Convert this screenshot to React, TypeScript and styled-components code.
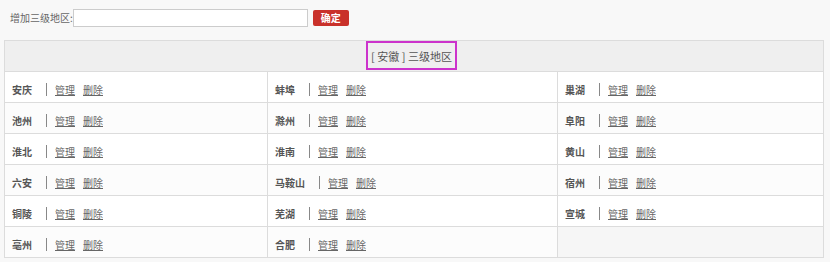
import React from "react";
import styled, { createGlobalStyle } from "styled-components";

const Global = createGlobalStyle`
  html, body { margin: 0; padding: 0; background: #ffffff; }
  body { font-family: "Noto Sans CJK SC", "Noto Sans", sans-serif; color: #555; }
`;

const Page = styled.div`
  width: 830px;
  height: 262px;
  background: #f8f8f8;
  box-sizing: border-box;
  padding: 9px 0 0 4px;
  overflow: hidden;
`;

const Toolbar = styled.div`
  display: flex;
  align-items: center;
  height: 18px;
  padding-left: 6px;
  margin-bottom: 13px;
`;

const Label = styled.span`
  font-size: 10px;
  color: #666;
  margin-right: 0;
  line-height: 18px;
  white-space: nowrap;
`;

const Input = styled.input`
  width: 235px;
  height: 18px;
  box-sizing: border-box;
  border: 1px solid #ccc;
  background: #fff;
  padding: 0 4px;
  margin: 0;
`;

const Button = styled.button`
  margin-left: 5px;
  width: 36px;
  height: 16px;
  border: none;
  border-radius: 2px;
  background: #c9312a;
  color: #fff;
  font-family: "Noto Sans CJK SC", sans-serif;
  font-size: 10px;
  font-weight: bold;
  line-height: 16px;
  padding: 0;
`;

const Table = styled.div`
  width: 820px;
  box-sizing: border-box;
  border: 1px solid #dcdcdc;
  border-bottom: none;
  background: #fff;
`;

const Header = styled.div`
  height: 30px;
  background: #efefef;
  border-bottom: 1px solid #dcdcdc;
  display: flex;
  justify-content: center;
`;

const HeaderTitle = styled.div`
  box-sizing: border-box;
  width: 91px;
  height: 29px;
  border: 2px solid #cc33cc;
  display: flex;
  align-items: center;
  justify-content: center;
  font-size: 11px;
  color: #555;
  white-space: nowrap;
  padding-top: 1px;
  margin-right: 5px;
`;

const Row = styled.div<{ $alt: boolean }>`
  display: grid;
  grid-template-columns: 263px 290px 1fr;
  height: 30px;
  border-bottom: 1px solid #dcdcdc;
  background: ${(p) => (p.$alt ? "#fcfcfc" : "#fff")};
`;

const Cell = styled.div<{ $empty?: boolean }>`
  display: flex;
  align-items: center;
  padding: 5px 0 0 7px;
  box-sizing: border-box;
  font-size: 10px;
  border-right: 1px solid #dcdcdc;
  background: ${(p) => (p.$empty ? "#f6f6f6" : "transparent")};
  &:last-child { border-right: none; }
`;

const Name = styled.span`
  font-weight: bold;
  color: #555;
  margin-right: 14px;
`;

const Sep = styled.span`
  display: inline-block;
  width: 1px;
  height: 13px;
  background: #888;
  margin: 0 8px 0 0;
`;

const Link = styled.a`
  color: #666;
  text-decoration: underline;
  margin-right: 8px;
  cursor: pointer;
`;

const rows = [
  ["安庆", "蚌埠", "巢湖"],
  ["池州", "滁州", "阜阳"],
  ["淮北", "淮南", "黄山"],
  ["六安", "马鞍山", "宿州"],
  ["铜陵", "芜湖", "宣城"],
  ["亳州", "合肥", ""],
];

export default function App() {
  return (
    <>
      <Global />
      <Page>
        <Toolbar>
          <Label>增加三级地区:</Label>
          <Input />
          <Button>确定</Button>
        </Toolbar>
        <Table>
          <Header>
            <HeaderTitle>[ 安徽 ] 三级地区</HeaderTitle>
          </Header>
          {rows.map((r, i) => (
            <Row key={i} $alt={i % 2 === 1}>
              {r.map((n, j) =>
                n ? (
                  <Cell key={j}>
                    <Name>{n}</Name>
                    <Sep />
                    <Link>管理</Link>
                    <Link>删除</Link>
                  </Cell>
                ) : (
                  <Cell key={j} $empty />
                )
              )}
            </Row>
          ))}
        </Table>
      </Page>
    </>
  );
}
